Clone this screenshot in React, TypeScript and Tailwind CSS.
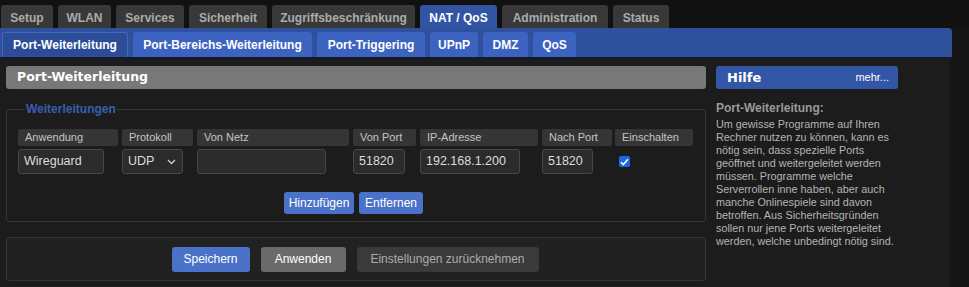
import React from "react";

const mainTabs = [
  { label: "Setup", w: "w-[52px]" },
  { label: "WLAN", w: "w-[53px]" },
  { label: "Services", w: "w-[68px]" },
  { label: "Sicherheit", w: "w-[78px]" },
  { label: "Zugriffsbeschränkung", w: "w-[143px]" },
  { label: "NAT / QoS", w: "w-[77px]", active: true },
  { label: "Administration", w: "w-[106px]" },
  { label: "Status", w: "w-[56px]" },
];

const subTabs = [
  { label: "Port-Weiterleitung", w: "w-[126px]", active: true },
  { label: "Port-Bereichs-Weiterleitung", w: "w-[179px]" },
  { label: "Port-Triggering", w: "w-[108px]" },
  { label: "UPnP", w: "w-[48px]" },
  { label: "DMZ", w: "w-[45px]" },
  { label: "QoS", w: "w-[43px]" },
];

const helpLines = [
  "Um gewisse Programme auf Ihren",
  "Rechner nutzen zu können, kann es",
  "nötig sein, dass spezielle Ports",
  "geöffnet und weitergeleitet werden",
  "müssen. Programme welche",
  "Serverrollen inne haben, aber auch",
  "manche Onlinespiele sind davon",
  "betroffen. Aus Sicherheitsgründen",
  "sollen nur jene Ports weitergeleitet",
  "werden, welche unbedingt nötig sind.",
];

const Label = ({ text, w }: { text: string; w: string }) => (
  <div className={`${w} h-[17px] bg-[#353535] rounded-[2px] pl-[7px] text-[11px] leading-[17px] text-[#c4c4c4]`}>
    {text}
  </div>
);

const Field = ({ value, w }: { value: string; w: string }) => (
  <div className={`${w} h-[25px] bg-[#2b2b2b] border border-[#474747] rounded-[3px] pl-[5px] text-[12.5px] leading-[23px] text-[#dcdcdc]`}>
    {value}
  </div>
);

const App = () => {
  return (
    <div className="w-[969px] h-[287px] overflow-hidden bg-[#151515] font-['Liberation_Sans',Arial,sans-serif]">
      <div className="bg-[#111111] h-[28px] flex items-end gap-[5px] pl-[1px]">
        {mainTabs.map((t) => (
          <div
            key={t.label}
            className={`${t.w} h-[23px] rounded-t-[3px] flex items-center justify-center pt-[2px] text-[12px] font-bold ${
              t.active ? "bg-[#3154a3] text-white" : "bg-[#383838] text-[#ababab]"
            }`}
          >
            {t.label}
          </div>
        ))}
      </div>

      <div className="w-[950px] h-[29px] bg-[#2f519d] rounded-tr-[4px] flex items-end gap-[5px] pl-[2px] border-b-2 border-[#141a27] box-content">
        {subTabs.map((t) => (
          <div
            key={t.label}
            className={`${t.w} h-[25px] rounded-t-[3px] flex items-center justify-center text-[12px] font-bold text-white ${
              t.active ? "bg-[#2c4c98] border border-b-0 border-[#4367bd]" : "bg-[#3c63bf]"
            }`}
          >
            {t.label}
          </div>
        ))}
      </div>

      <div className="w-[950px] h-[228px] bg-[#1c1c1c] flex gap-[10px] pl-[6px] pt-[7px]">
        <div className="w-[700px] flex flex-col">
          <div className="h-[23px] bg-[#787878] rounded-[3px] pl-[11px] flex items-center font-['DejaVu_Sans',sans-serif] font-bold text-[12.5px] text-white">
            Port-Weiterleitung
          </div>

          <fieldset className="mt-[13px] border border-[#373737] rounded-[3px] pl-[11px] pr-[10px] pt-[13px] pb-[7px]">
            <legend className="ml-[7px] px-[1px] text-[12px] leading-[14px] font-bold text-[#3a5eb2]">
              Weiterleitungen
            </legend>
            <div className="flex gap-[4px]">
              <div className="flex flex-col gap-[3px]">
                <Label text="Anwendung" w="w-[100px]" />
                <Field value="Wireguard" w="w-[86px]" />
              </div>
              <div className="flex flex-col gap-[3px]">
                <Label text="Protokoll" w="w-[71px]" />
                <div className="w-[61px] h-[25px] bg-[#2b2b2b] border border-[#474747] rounded-[3px] pl-[5px] pr-[6px] flex items-center justify-between text-[12.5px] text-[#dcdcdc]">
                  <span>UDP</span>
                  <svg width="9" height="6" viewBox="0 0 9 6" fill="none">
                    <path d="M1 1l3.5 3.5L8 1" stroke="#cfcfcf" strokeWidth="1.3" />
                  </svg>
                </div>
              </div>
              <div className="flex flex-col gap-[3px]">
                <Label text="Von Netz" w="w-[152px]" />
                <Field value="" w="w-[129px]" />
              </div>
              <div className="flex flex-col gap-[3px]">
                <Label text="Von Port" w="w-[63px]" />
                <Field value="51820" w="w-[52px]" />
              </div>
              <div className="flex flex-col gap-[3px]">
                <Label text="IP-Adresse" w="w-[118px]" />
                <Field value="192.168.1.200" w="w-[100px]" />
              </div>
              <div className="flex flex-col gap-[3px]">
                <Label text="Nach Port" w="w-[70px]" />
                <Field value="51820" w="w-[51px]" />
              </div>
              <div className="flex flex-col gap-[3px] -ml-[1px]">
                <Label text="Einschalten" w="w-[78px]" />
                <div className="h-[25px] pl-[4px] flex items-center">
                  <span className="w-[11px] h-[11px] rounded-[2px] bg-[#1a6ae0] flex items-center justify-center">
                    <svg width="9" height="8" viewBox="0 0 9 8" fill="none">
                      <path d="M1 4.2l2.3 2.3L8 1.2" stroke="white" strokeWidth="1.6" />
                    </svg>
                  </span>
                </div>
              </div>
            </div>
            <div className="flex justify-center gap-[5px] mt-[18px] mr-[6px]">
              <button className="w-[70px] h-[22px] bg-[#4a72c9] rounded-[3px] text-[12px] text-white">Hinzufügen</button>
              <button className="w-[64px] h-[22px] bg-[#4a72c9] rounded-[3px] text-[12px] text-white">Entfernen</button>
            </div>
          </fieldset>

          <div className="mt-[15px] h-[44px] bg-[#212121] border border-[#353535] rounded-[3px] flex items-center justify-center gap-[11px] pr-[2px]">
            <button className="w-[78px] h-[25px] bg-[#4a72c9] rounded-[3px] text-[12px] text-white">Speichern</button>
            <button className="w-[85px] h-[25px] bg-[#6a6a6a] rounded-[3px] text-[12px] text-white">Anwenden</button>
            <button className="w-[182px] h-[25px] bg-[#3a3a3a] rounded-[3px] text-[12px] text-[#acacac]">
              Einstellungen zurücknehmen
            </button>
          </div>
        </div>

        <div className="w-[182px] flex flex-col">
          <div className="h-[23px] bg-[#3356a6] rounded-[3px] pl-[11px] pr-[9px] flex items-center justify-between text-white">
            <span className="font-['DejaVu_Sans',sans-serif] font-bold text-[13px]">Hilfe</span>
            <span className="text-[11px]">mehr...</span>
          </div>
          <div className="mt-[12px] text-[12px] leading-[14px] font-bold text-[#9a9a9a]">Port-Weiterleitung:</div>
          <div className="mt-[3px] text-[10.8px] leading-[13px] text-[#b4b4b4] whitespace-nowrap">
            {helpLines.map((l) => (
              <div key={l}>{l}</div>
            ))}
          </div>
        </div>
      </div>
    </div>
  );
};

export default App;
